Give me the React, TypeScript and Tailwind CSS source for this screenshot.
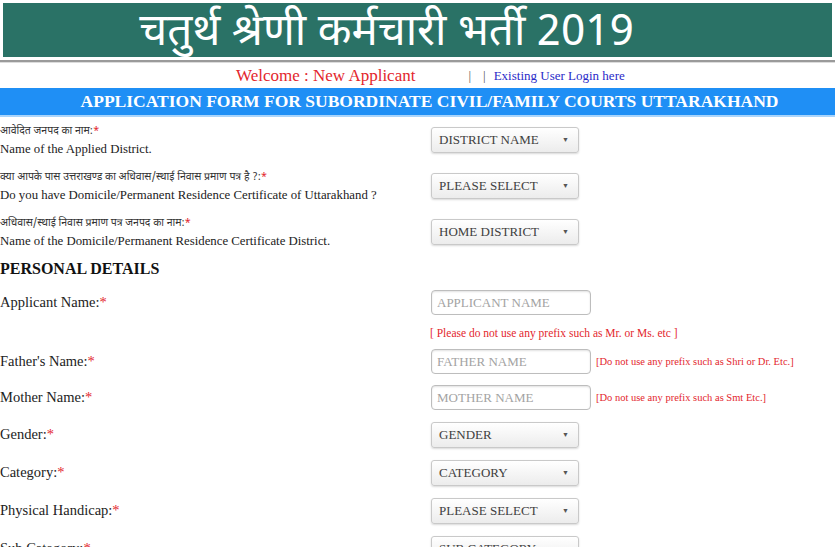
const serif = "font-['Liberation_Serif','DejaVu_Serif',serif]";
const hindi = "font-['Noto_Sans_Devanagari','Lohit_Devanagari','Noto_Sans','FreeSans',sans-serif]";

function Star() {
  return <span className="text-[#e3262d]">*</span>;
}

function Select({ label }: { label: string }) {
  return (
    <div className="w-[148px] h-[26px] flex items-center justify-between pl-[7px] pr-[9px] rounded-[3px] border border-[#c9c9c9] bg-gradient-to-b from-white to-[#ececec] shadow-[0_1px_2px_rgba(0,0,0,0.15)]">
      <span className={`${serif} text-[13px] text-[#404040]`}>{label}</span>
      <span className="text-[7px] text-[#555]">▼</span>
    </div>
  );
}

function TextInput({ placeholder }: { placeholder: string }) {
  return (
    <input
      placeholder={placeholder}
      className={`${serif} w-[160px] h-[25px] px-[5px] text-[13px] rounded-[4px] border border-[#bdbdbd] bg-white shadow-[inset_0_1px_2px_rgba(0,0,0,0.12)] placeholder-[#a3a3a3] focus:outline-none`}
    />
  );
}

function DualLabel({ hi, en }: { hi: string; en: string }) {
  return (
    <div className="leading-tight">
      <div className={`${hindi} text-[10.5px] text-[#333]`}>
        {hi}
        <Star />
      </div>
      <div className={`${serif} text-[12.8px] text-[#222] mt-[4px]`}>{en}</div>
    </div>
  );
}

function Label({ text }: { text: string }) {
  return (
    <div className={`${serif} text-[14.5px] text-[#222]`}>
      {text}
      <Star />
    </div>
  );
}

export default function App() {
  const topRows = [
    { hi: "आवेदित जनपद का नाम:", en: "Name of the Applied District.", sel: "DISTRICT NAME" },
    {
      hi: "क्या आपके पास उत्तराखण्ड का अधिवास/स्थाई निवास प्रमाण पत्र है ?:",
      en: "Do you have Domicile/Permanent Residence Certificate of Uttarakhand ?",
      sel: "PLEASE SELECT",
    },
    {
      hi: "अधिवास/स्थाई निवास प्रमाण पत्र जनपद का नाम:",
      en: "Name of the Domicile/Permanent Residence Certificate District.",
      sel: "HOME DISTRICT",
    },
  ];

  const selectRows = [
    { label: "Gender:", sel: "GENDER" },
    { label: "Category:", sel: "CATEGORY" },
    { label: "Physical Handicap:", sel: "PLEASE SELECT" },
    { label: "Sub Category:", sel: "SUB CATEGORY" },
  ];

  return (
    <div className="w-[835px] h-[547px] overflow-hidden bg-white">
      {/* header banner */}
      <div className="pt-[3px] px-[3px]">
        <div className="h-[54px] bg-[#2a7266] flex items-center justify-center pr-[62px] pt-[10px]">
          <h1 className={`${hindi} text-white text-[44px] leading-none`}>चतुर्थ श्रेणी कर्मचारी भर्ती 2019</h1>
        </div>
      </div>
      <div className="mt-[3px] h-[3px] border-t-2 border-[#9a9a9a] border-b border-b-[#dcdcdc]" />

      {/* welcome row */}
      <div className="h-[25px] flex items-center pl-[236px]">
        <span className={`${serif} text-[17px] text-[#e3262d]`}>Welcome : New Applicant</span>
        <span className={`${serif} ml-[53px] text-[13px] text-[#555]`}>|</span>
        <span className={`${serif} ml-[12px] text-[13px] text-[#555]`}>|</span>
        <a className={`${serif} ml-[8px] text-[13px] text-[#2a2ac8]`}>Existing User Login here</a>
      </div>

      {/* title bar */}
      <div className="h-[27px] bg-[#1f8ff5] flex items-center justify-center pl-[24px]">
        <h2 className={`${serif} text-white font-bold text-[17.5px]`}>
          APPLICATION FORM FOR SUBORDINATE CIVIL/FAMILY COURTS UTTARAKHAND
        </h2>
      </div>
      <div className="h-[2px] bg-[#a9d4fb]" />

      {/* form */}
      <div className="pt-[8px]">
        {topRows.map((r) => (
          <div key={r.sel} className="grid grid-cols-[431px_1fr] h-[46px]">
            <DualLabel hi={r.hi} en={r.en} />
            <div className="pt-[2px]">
              <Select label={r.sel} />
            </div>
          </div>
        ))}

        <div className={`${serif} font-bold text-[16px] text-[#111] mt-[-2px] leading-none`}>PERSONAL DETAILS</div>

        <div className="grid grid-cols-[431px_1fr] items-center mt-[13px]">
          <Label text="Applicant Name:" />
          <TextInput placeholder="APPLICANT NAME" />
        </div>
        <div className="pl-[430px] mt-[7px] h-[18px] leading-[18px]">
          <span className={`${serif} text-[11.5px] text-[#e3262d]`}>
            [ Please do not use any prefix such as Mr. or Ms. etc ]
          </span>
        </div>

        <div className="grid grid-cols-[431px_1fr] items-center mt-[9px]">
          <Label text="Father's Name:" />
          <div className="flex items-center gap-[5px]">
            <TextInput placeholder="FATHER NAME" />
            <span className={`${serif} text-[10.5px] text-[#e3262d]`}>[Do not use any prefix such as Shri or Dr. Etc.]</span>
          </div>
        </div>
        <div className="grid grid-cols-[431px_1fr] items-center mt-[11px]">
          <Label text="Mother Name:" />
          <div className="flex items-center gap-[5px]">
            <TextInput placeholder="MOTHER NAME" />
            <span className={`${serif} text-[10.5px] text-[#e3262d]`}>[Do not use any prefix such as Smt Etc.]</span>
          </div>
        </div>

        {selectRows.map((r) => (
          <div key={r.label} className="grid grid-cols-[431px_1fr] items-center mt-[12px]">
            <Label text={r.label} />
            <Select label={r.sel} />
          </div>
        ))}
      </div>
    </div>
  );
}
